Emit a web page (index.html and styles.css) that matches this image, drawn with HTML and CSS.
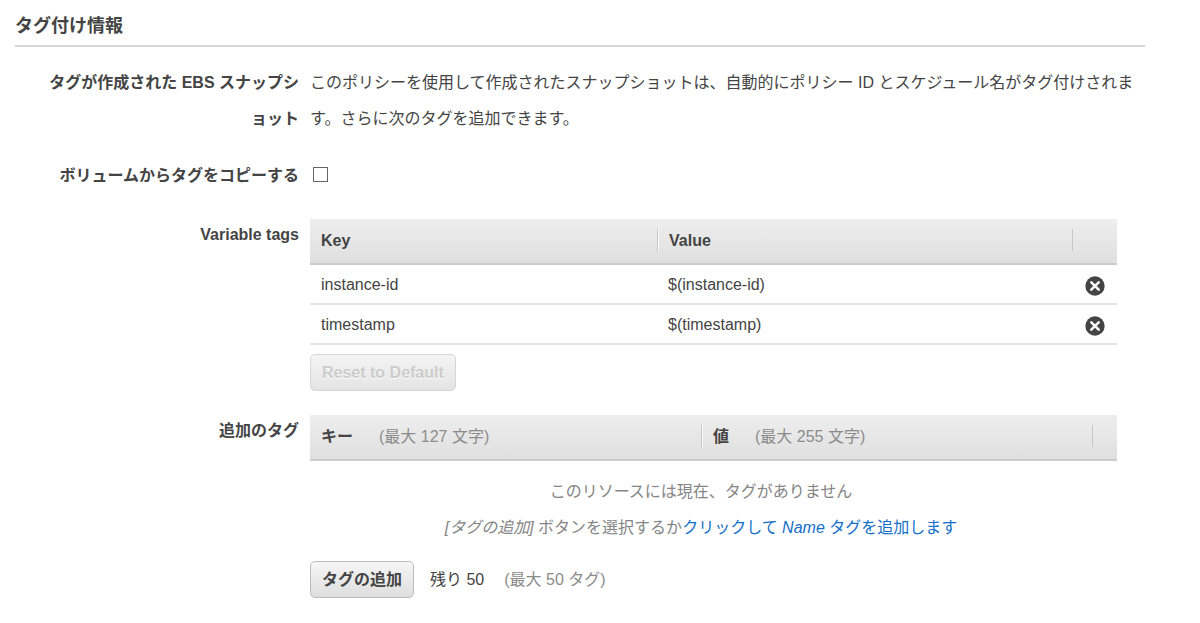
FILE: index.html
```html
<!DOCTYPE html>
<html lang="ja">
<head>
<meta charset="utf-8">
<meta name="viewport" content="width=device-width, initial-scale=1">
<title>タグ付け情報</title>
<link rel="stylesheet" href="styles.css">
</head>
<body>
<main class="section">
  <h1 class="section-title">タグ付け情報</h1>

  <div class="row">
    <div class="label">タグが作成された EBS スナップショット</div>
    <p class="description">このポリシーを使用して作成されたスナップショットは、自動的にポリシー ID とスケジュール名がタグ付けされます。さらに次のタグを追加できます。</p>
  </div>

  <div class="row row-copy">
    <label class="label" for="copy-tags">ボリュームからタグをコピーする</label>
    <div class="check-cell"><input class="checkbox" type="checkbox" id="copy-tags"></div>
  </div>

  <div class="row row-variable">
    <div class="label" id="variable-label">Variable tags</div>
    <div class="content">
      <table class="tags" aria-labelledby="variable-label">
        <colgroup><col class="col-key"><col><col class="col-remove"></colgroup>
        <thead>
          <tr>
            <th scope="col"><div class="head">Key</div></th>
            <th scope="col"><div class="head divided">Value</div></th>
            <th><div class="head divided last"></div></th>
          </tr>
        </thead>
        <tbody>
          <tr>
            <td>instance-id</td>
            <td>$(instance-id)</td>
            <td class="remove-cell"><button class="remove" type="button" aria-label="Remove instance-id"><svg viewBox="0 0 20 20" width="20" height="20"><circle cx="10" cy="10" r="9.7" fill="#444"/><path d="M6.3 6.3l7.4 7.4M13.7 6.3l-7.4 7.4" stroke="#fff" stroke-width="2.5" stroke-linecap="round"/></svg></button></td>
          </tr>
          <tr>
            <td>timestamp</td>
            <td>$(timestamp)</td>
            <td class="remove-cell"><button class="remove" type="button" aria-label="Remove timestamp"><svg viewBox="0 0 20 20" width="20" height="20"><circle cx="10" cy="10" r="9.7" fill="#444"/><path d="M6.3 6.3l7.4 7.4M13.7 6.3l-7.4 7.4" stroke="#fff" stroke-width="2.5" stroke-linecap="round"/></svg></button></td>
          </tr>
        </tbody>
      </table>
      <button class="button reset" type="button" disabled>Reset to Default</button>
    </div>
  </div>

  <div class="row row-extra">
    <div class="label" id="extra-label">追加のタグ</div>
    <div class="content">
      <table class="tags" aria-labelledby="extra-label">
        <colgroup><col class="col-half"><col><col class="col-end"></colgroup>
        <thead>
          <tr>
            <th scope="col"><div class="head">キー<span class="limit">(最大 127 文字)</span></div></th>
            <th scope="col"><div class="head divided">値<span class="limit">(最大 255 文字)</span></div></th>
            <th><div class="head divided last"></div></th>
          </tr>
        </thead>
        <tbody>
          <tr class="empty">
            <td colspan="2">
              <p>このリソースには現在、タグがありません</p>
              <p><i>[タグの追加]</i> ボタンを選択するか<a class="link" href="#">クリックして <i>Name</i> タグを追加します</a></p>
            </td>
            <td></td>
          </tr>
        </tbody>
      </table>
      <div class="actions">
        <button class="button" type="button">タグの追加</button>
        <span>残り 50</span>
        <span class="quota">(最大 50 タグ)</span>
      </div>
    </div>
  </div>
</main>
</body>
</html>
```

FILE: styles.css
```css
* {
  box-sizing: border-box;
}

body {
  margin: 0;
  background: #fff;
  color: #444;
  font: 16px/36px "Liberation Sans", "Noto Sans CJK JP", sans-serif;
}

p {
  margin: 0;
}

.section {
  padding: 8px 55px 24px 15px;
}

.section-title {
  margin: 0 0 18px;
  padding-bottom: 1px;
  border-bottom: 2px solid #d6d6d6;
  font-size: 18px;
  line-height: 36px;
}

.row {
  display: grid;
  grid-template-columns: 284px 1fr;
  column-gap: 11px;
}

.label {
  padding-left: 24px;
  font-weight: bold;
  text-align: right;
  line-break: loose;
}

.row-copy {
  margin-top: 21px;
}

.check-cell {
  display: flex;
  align-items: center;
  padding: 0 0 3px 3px;
}

.checkbox {
  appearance: none;
  width: 15px;
  height: 15px;
  margin: 0;
  border: 1px solid #666;
  background: #fff;
}

.checkbox:checked {
  background: #666;
}

.row-variable {
  margin-top: 23px;
}

.row-extra {
  margin-top: 22px;
}

.content {
  padding: 2px 28px 0 0;
}

.tags {
  width: 100%;
  table-layout: fixed;
  border-collapse: separate;
  border-spacing: 0;
}

.col-key {
  width: 43%;
}

.col-remove {
  width: 45px;
}

.col-half {
  width: 391px;
}

.col-end {
  width: 25px;
}

.tags th {
  padding: 10px 0 12px;
  border-bottom: 2px solid #ccc;
  background: linear-gradient(#eee, #dfdfdf);
  text-align: left;
}

.head {
  height: 22px;
  padding-left: 11px;
  line-height: 24px;
}

.divided {
  border-left: 1px solid #c6c6c6;
  box-shadow: inset 1px 0 #fafafa;
}

.last {
  box-shadow: none;
}

.limit {
  margin-left: 26px;
  color: #8c8c8c;
  font-weight: normal;
}

.tags td {
  height: 40px;
  padding: 1px 11px 0;
  border-bottom: 2px solid #e2e2e2;
}

.tags .remove-cell {
  padding: 0 12px 0 0;
}

.remove {
  display: block;
  width: 20px;
  height: 20px;
  margin: 4px 0 0 auto;
  padding: 0;
  border: 0;
  background: none;
  cursor: pointer;
}

.remove svg {
  display: block;
}

.button {
  height: 37px;
  padding: 0 11px;
  border: 1px solid #bcbcbc;
  border-radius: 5px;
  background: linear-gradient(#f6f6f6, #dedede);
  color: #444;
  font: bold 16px/24px "Liberation Sans", "Noto Sans CJK JP", sans-serif;
}

.button:disabled {
  border-color: #d6d6d6;
  background: linear-gradient(#f4f4f4, #e4e4e4);
  color: #ccc;
  text-shadow: 0 1px #fff;
}

.reset {
  display: block;
  margin-top: 9px;
}

.tags .empty td {
  padding: 13px 0 15px;
  border: 0;
  color: #858585;
  text-align: center;
}

.link {
  color: #146fc8;
  text-decoration: none;
}

.actions {
  display: flex;
  align-items: center;
}

.actions .button {
  margin-right: 16px;
}

.quota {
  margin-left: 20px;
  color: #8c8c8c;
}
```
